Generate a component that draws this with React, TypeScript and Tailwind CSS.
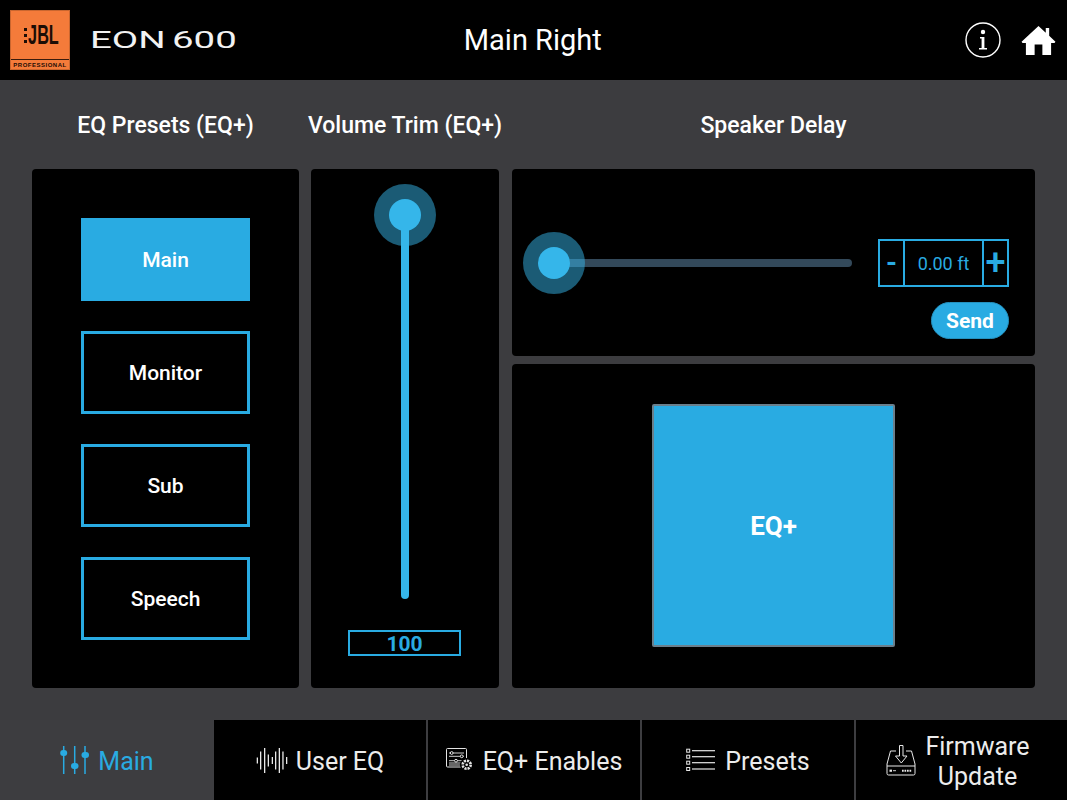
import type { ReactNode } from 'react'

const presets = ['Main', 'Monitor', 'Sub', 'Speech']

function JblLogo() {
  return (
    <div className="flex h-[60px] w-[60px] shrink-0 flex-col border border-[#c9662f] bg-[#f47b3a] font-['Liberation_Sans',sans-serif] font-bold text-[#1c0d05]">
      <div className="relative flex h-[48px] items-center justify-center pl-[6px]">
        <div className="absolute top-[17px] left-[13px] flex flex-col gap-[3px]">
          <div className="h-[3px] w-[3px] bg-[#1c0d05]" />
          <div className="h-[3px] w-[3px] bg-[#1c0d05]" />
          <div className="h-[3px] w-[3px] bg-[#1c0d05]" />
        </div>
        <span className="inline-block scale-x-[0.58] text-[28px] leading-none">JBL</span>
      </div>
      <div className="flex flex-1 items-center justify-center border-t border-[#3a1c0c] text-[6px] leading-none tracking-[0.5px]">
        PROFESSIONAL
      </div>
    </div>
  )
}

function EonLogo() {
  return (
    <div className="w-[147px] shrink-0 text-[24px] leading-none text-[#f2f2f2]">
      <span className="inline-block origin-left scale-x-[1.6] [word-spacing:-2px]">EON 600</span>
    </div>
  )
}

function InfoIcon() {
  return (
    <svg width="36" height="36" viewBox="0 0 36 36">
      <circle cx="18" cy="18" r="17" fill="none" stroke="#fff" strokeWidth="1.4" />
      <circle cx="18" cy="10" r="2.2" fill="#fff" />
      <path d="M15 15h4.400v11H22v1.600h-8V26h2.600v-9.400H15z" fill="#fff" />
    </svg>
  )
}

function HomeIcon() {
  return (
    <svg width="35" height="31" viewBox="0 0 36 32">
      <path d="M18 1 L25.500 8 V3 H29 V11.200 L35.500 17.200 L34.500 18.500 H31 V31 H22 V20 H14 V31 H5 V18.500 H1.500 L0.500 17.200 Z" fill="#fff" />
    </svg>
  )
}

function SlidersIcon() {
  return (
    <svg width="29" height="28" viewBox="0 0 29 28" fill="none">
      <path d="M3.700 0v28M14.700 0v28M25 0v28" stroke="#29abe2" strokeWidth="1.500" />
      <g fill="#29abe2">
        <rect x="0.200" y="4" width="7" height="6" rx="3" />
        <rect x="11" y="17" width="7.500" height="6" rx="3" />
        <rect x="21.500" y="6" width="7.500" height="6" rx="3" />
      </g>
    </svg>
  )
}

function WaveIcon() {
  const bars = [
    [0.7, 6], [4, 18], [8, 25], [11.700, 12], [15.700, 7], [19, 18], [22.700, 25], [26.300, 18], [30, 7],
  ]
  return (
    <svg width="32" height="25" viewBox="0 0 32 25">
      {bars.map(([x, h]) => (
        <rect key={x} x={x} y={12.5 - h / 2} width="1.300" height={h} fill="#e8e8e8" />
      ))}
    </svg>
  )
}

function EnablesIcon() {
  return (
    <svg width="27" height="24" viewBox="0 0 27 24" fill="none" stroke="#e4e4e4">
      <path d="M20.500 19H1.500a1 1 0 0 1-1-1V1.500a1 1 0 0 1 1-1h18a1 1 0 0 1 1 1V19" strokeWidth="1" />
      <path d="M3 5h15M3 8.300h15M3 12.700h15M3 15h13M3 17h13" strokeWidth="0.900" />
      <circle cx="5.700" cy="5" r="1.400" fill="#000" strokeWidth="1" />
      <circle cx="15.700" cy="8.300" r="1.400" fill="#000" strokeWidth="1" />
      <circle cx="10" cy="12.700" r="1.400" fill="#000" strokeWidth="1" />
      <circle cx="20.700" cy="16.700" r="6.800" fill="#000" stroke="none" />
      <circle cx="20.700" cy="16.700" r="4" strokeWidth="2.600" strokeDasharray="2.200 0.900" />
      <circle cx="20.700" cy="16.700" r="1.300" fill="#e4e4e4" stroke="none" />
    </svg>
  )
}

function ListIcon() {
  return (
    <svg width="29" height="24" viewBox="0 0 29 24" fill="none" stroke="#e8e8e8">
      {[2.700, 8.700, 14.700, 21].map((y) => (
        <g key={y}>
          <rect x="0.700" y={y - 1.5} width="3" height="3" strokeWidth="1" />
          <path d={`M6 ${y}h23`} strokeWidth="1.200" />
        </g>
      ))}
    </svg>
  )
}

function FirmwareIcon() {
  return (
    <svg width="30" height="31" viewBox="0 0 30 31" fill="none" stroke="#e8e8e8" strokeWidth="1">
      <path d="M10 6H4.500L1 19v9.500A1.500 1.500 0 0 0 2.500 30h25a1.500 1.500 0 0 0 1.500-1.500V19L25.500 6H20" />
      <path d="M1 21h28" />
      <path d="M13.500 0.500h3.500V11h4l-5.700 7-5.800-7h4z" />
      <path d="M3.500 25.700h2.500" strokeWidth="2.200" />
      <path d="M7 25.700h3" strokeWidth="0.900" />
      <path d="M16 25.700h10" strokeWidth="2" strokeDasharray="1.700 0.800" />
    </svg>
  )
}

function NavItem({ icon, active, last, gap, children }: { icon: ReactNode; active?: boolean; last?: boolean; gap: string; children: ReactNode }) {
  return (
    <div
      className={`flex items-center justify-center ${gap} ${last ? 'pr-[7px]' : ''} ${last || active ? '' : 'border-r-2 border-[#3d3d40]'} ${active ? 'bg-[#3d3d40] text-[#29abe2]' : 'bg-black text-[#ececec]'}`}
    >
      {icon}
      <div className="pt-[3px] text-center">{children}</div>
    </div>
  )
}

export default function App() {
  return (
    <div className="flex h-[800px] w-[1067px] flex-col overflow-hidden bg-black font-['Roboto',sans-serif] text-white">
      {/* Header */}
      <header className="flex h-20 shrink-0 items-center justify-between bg-black pr-[11.500px] pl-[10px]">
        <div className="flex w-[400px] items-center gap-[20px]">
          <JblLogo />
          <EonLogo />
        </div>
        <div className="text-[29px] leading-none">Main Right</div>
        <div className="flex w-[400px] items-center justify-end gap-[20px]">
          <InfoIcon />
          <HomeIcon />
        </div>
      </header>

      {/* Main area */}
      <main className="flex min-h-0 flex-1 flex-col bg-[#3c3c3f] pr-8 pb-8 pl-8">
        <div className="grid h-[89px] shrink-0 grid-cols-[267px_188px_524px] gap-x-3 pt-[3px] text-[23px] font-medium">
          <div className="flex items-center justify-center">EQ Presets (EQ+)</div>
          <div className="flex items-center justify-center whitespace-nowrap">Volume Trim (EQ+)</div>
          <div className="ml-px flex items-center justify-center">Speaker Delay</div>
        </div>

        <div className="grid min-h-0 flex-1 grid-cols-[267px_188px_524px] gap-x-3">
          {/* Presets */}
          <section className="flex flex-col items-center gap-[30px] rounded-[4px] bg-black pt-[49px]">
            {presets.map((p, i) => (
              <div
                key={p}
                className={`flex h-[83px] w-[169px] items-center justify-center border-[3px] border-[#29abe2] pt-[2px] text-[21px] font-medium ${i === 0 ? 'bg-[#29abe2]' : 'bg-black'}`}
              >
                {p}
              </div>
            ))}
          </section>

          {/* Volume trim */}
          <section className="flex flex-col items-center rounded-[4px] bg-black pt-[46px]">
            <div className="relative h-[384px] w-2 rounded-full bg-[#35b6ea]">
              <div className="absolute -top-[31px] -left-[27px] flex h-[62px] w-[62px] items-center justify-center rounded-full bg-[#35b6ea]/50">
                <div className="h-8 w-8 rounded-full bg-[#35b6ea]" />
              </div>
            </div>
            <div className="mt-[31px] mr-px flex h-[26px] w-[113px] items-center justify-center border-2 border-[#29abe2] pt-[2px] text-[21px] leading-none font-bold text-[#29abe2]">
              100
            </div>
          </section>

          {/* Delay + EQ */}
          <div className="ml-px flex flex-col gap-2">
            <section className="flex h-[187px] shrink-0 justify-between rounded-[4px] bg-black pt-[70px] pr-[26px] pl-[42px]">
              <div className="flex h-12 items-center">
                <div className="relative h-2 w-[298px] rounded-full bg-[#33495a]">
                  <div className="absolute -top-[27px] -left-[31px] flex h-[62px] w-[62px] items-center justify-center rounded-full bg-[#35b6ea]/50">
                    <div className="h-8 w-8 rounded-full bg-[#35b6ea]" />
                  </div>
                </div>
              </div>
              <div className="flex flex-col items-end gap-[15px]">
                <div className="flex h-12 w-[131px] items-stretch border-2 border-[#29abe2] text-[#29abe2]">
                  <div className="flex w-[25px] items-center justify-center border-r-2 border-[#29abe2] text-[28px] font-bold">-</div>
                  <div className="flex flex-1 items-center justify-center text-[18px]">0.00 ft</div>
                  <div className="flex w-[25px] items-center justify-center border-l-2 border-[#29abe2] text-[36px] leading-none font-medium">+</div>
                </div>
                <div className="flex h-[37px] w-[78px] items-center justify-center rounded-full border border-[#2590bd] bg-[#29abe2] pt-[2px] text-[21px] leading-none font-bold">Send</div>
              </div>
            </section>
            <section className="flex flex-1 items-center justify-center rounded-[4px] bg-black">
              <div className="mb-px flex h-[243px] w-[243px] items-center justify-center rounded-[2px] border-2 border-[#6a7f8c] bg-[#29abe2] pt-[2px] text-[26px] font-bold">
                EQ+
              </div>
            </section>
          </div>
        </div>
      </main>

      {/* Bottom nav */}
      <nav className="grid h-20 shrink-0 grid-cols-[214px_214px_214px_214px_1fr] text-[25px] leading-[30px]">
        <NavItem active gap="gap-[9px]" icon={<SlidersIcon />}>Main</NavItem>
        <NavItem gap="gap-[8px]" icon={<WaveIcon />}>User EQ</NavItem>
        <NavItem gap="gap-[10px]" icon={<EnablesIcon />}>EQ+ Enables</NavItem>
        <NavItem gap="gap-[10px]" icon={<ListIcon />}>Presets</NavItem>
        <NavItem last gap="gap-[9px]" icon={<FirmwareIcon />}>
          Firmware<br />Update
        </NavItem>
      </nav>
    </div>
  )
}
